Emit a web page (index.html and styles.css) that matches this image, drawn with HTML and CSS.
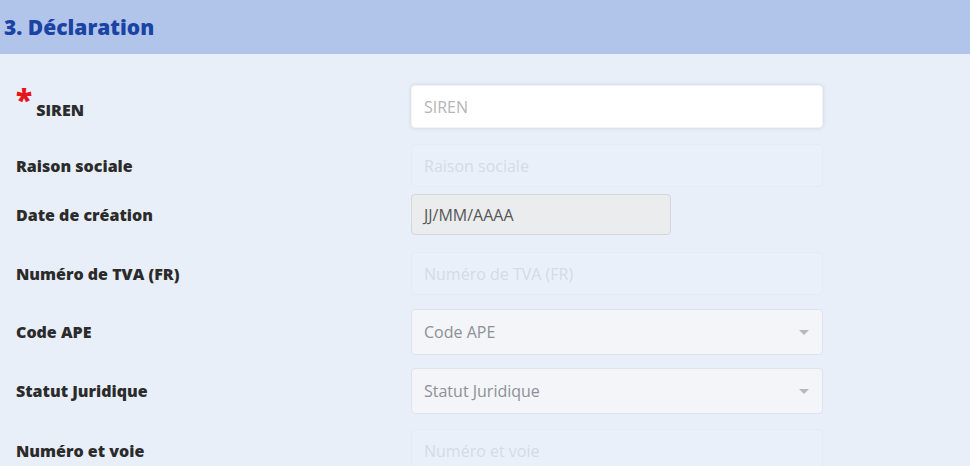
FILE: index.html
```html
<!DOCTYPE html>
<html lang="fr">
<head>
    <meta charset="UTF-8">
    <meta name="viewport" content="width=device-width, initial-scale=1.0">
    <title>Déclaration</title>
    <link rel="stylesheet" href="styles.css">
</head>
<body>
    <header class="section-header">
        <h2>3. Déclaration</h2>
    </header>

    <form class="form">
        <div class="row row-siren">
            <label class="label"><span class="required">*</span> SIREN</label>
            <input type="text" class="field field-active" placeholder="SIREN">
        </div>
        <div class="row row-raison">
            <label class="label">Raison sociale</label>
            <input type="text" class="field field-disabled" placeholder="Raison sociale" disabled>
        </div>
        <div class="row row-date">
            <label class="label">Date de création</label>
            <div class="field field-date">JJ/MM/AAAA</div>
        </div>
        <div class="row row-tva">
            <label class="label">Numéro de TVA (FR)</label>
            <input type="text" class="field field-disabled" placeholder="Numéro de TVA (FR)" disabled>
        </div>
        <div class="row row-ape">
            <label class="label">Code APE</label>
            <div class="field field-select">Code APE<span class="caret"></span></div>
        </div>
        <div class="row row-statut">
            <label class="label">Statut Juridique</label>
            <div class="field field-select">Statut Juridique<span class="caret"></span></div>
        </div>
        <div class="row row-voie">
            <label class="label">Numéro et voie</label>
            <input type="text" class="field field-disabled" placeholder="Numéro et voie" disabled>
        </div>
    </form>
</body>
</html>
```

FILE: styles.css
```css
body {
    margin: 0;
    font-family: "Open Sans", Arial, sans-serif;
    background-color: #e8eff9;
    height: 466px;
    overflow: hidden;
}

.section-header {
    background-color: #b1c5ea;
    height: 54px;
    display: flex;
    align-items: center;
    padding: 0 4px;
}

.section-header h2 {
    margin: 0;
    font-size: 21px;
    font-weight: 800;
    color: #1a43a4;
}

.form {
    padding: 31px 0 0 16px;
}

.row {
    display: flex;
    align-items: center;
}

.label {
    width: 395px;
    font-size: 16px;
    font-weight: 800;
    color: #2b2b2b;
}

.required {
    color: #e8141c;
    font-size: 30px;
    font-weight: 800;
    line-height: 14px;
    vertical-align: 5px;
}

.field {
    box-sizing: border-box;
    width: 412px;
    height: 43px;
    padding: 0 12px;
    font-family: inherit;
    font-size: 16px;
    border-radius: 4px;
    display: flex;
    align-items: center;
    outline: none;
}

.field-active {
    background-color: #fff;
    border: 1px solid #f3f3f3;
    box-shadow: 0 0 4px rgba(0, 0, 0, 0.12);
    color: #333;
}

.field-active::placeholder {
    color: #b4b4b8;
}

.field-disabled {
    background-color: #eaf0f9;
    border: 1px solid #e4ebf5;
}

.field-disabled::placeholder {
    color: #d3dbe7;
}

.field-date {
    width: 260px;
    height: 41px;
    background-color: #ebecee;
    border: 1px solid #d3d7dc;
    color: #565656;
}

.field-select {
    height: 46px;
    position: relative;
    background-color: #f3f5f9;
    border: 1px solid #dde3eb;
    color: #8c9097;
}

.caret {
    position: absolute;
    right: 13px;
    top: 20px;
    border-left: 5px solid transparent;
    border-right: 5px solid transparent;
    border-top: 5px solid #b5b8bd;
}

.row-raison {
    margin-top: 16px;
}

.row-date {
    margin-top: 7px;
}

.row-tva {
    margin-top: 17px;
}

.row-ape {
    margin-top: 14px;
}

.row-statut {
    margin-top: 13px;
}

.row-voie {
    margin-top: 15px;
}
```
